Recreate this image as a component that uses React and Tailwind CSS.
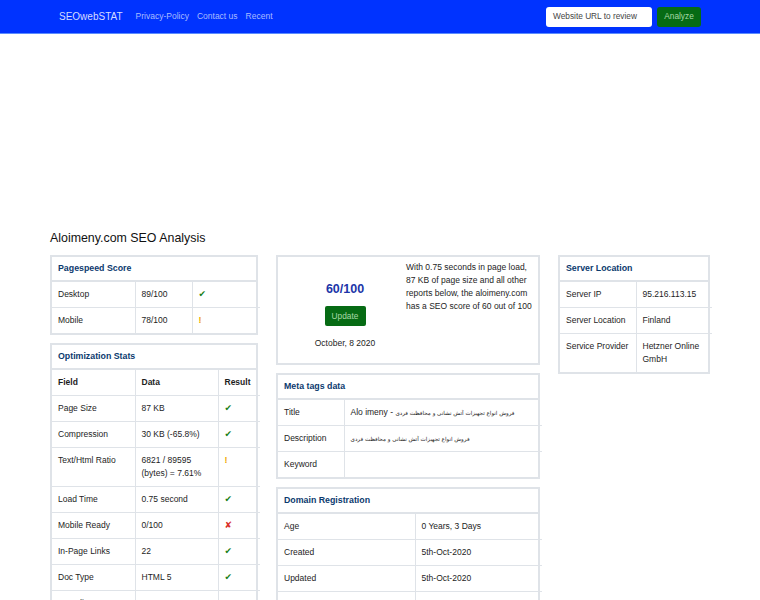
import React from 'react'

const font = { fontFamily: '"Liberation Sans", Arial, "DejaVu Sans", sans-serif' }
const arabic = { fontFamily: '"DejaVu Sans", sans-serif' }

function Check() {
  return <span className="text-[#1a7f1a] text-[9px]">✔</span>
}
function Warn() {
  return <span className="text-[#f0a800] font-bold text-[9px]">!</span>
}
function Cross() {
  return <span className="text-[#d9302a] text-[9px]">✘</span>
}

function Card({ title, children, className = '' }) {
  return (
    <div className={`border-2 border-[#dfe3e8] ${className}`}>
      <div className="px-[6px] h-[25px] flex items-center border-b-2 border-[#dfe3e8] text-[8.8px] font-bold text-[#0b3a6e]">
        {title}
      </div>
      <table className="w-full border-collapse table-fixed">
        <tbody>{children}</tbody>
      </table>
    </div>
  )
}

function Row({ cells, widths, bold }) {
  return (
    <tr className="border-t border-[#dfe3e8] first:border-t-0">
      {cells.map((c, i) => (
        <td
          key={i}
          style={widths ? { width: widths[i] } : undefined}
          className={`align-top px-[6px] py-[6px] leading-[13px] text-[8.5px] text-[#1d1d1d] border-l border-[#dfe3e8] first:border-l-0 whitespace-nowrap ${bold ? 'font-bold' : ''}`}
        >
          {c}
        </td>
      ))}
    </tr>
  )
}

function Ar({ children }) {
  return <span style={arabic} className="text-[5.6px] leading-[8px] inline-block align-middle">{children}</span>
}

export default function App() {
  const opt = [
    ['Page Size', '87 KB', <Check />],
    ['Compression', '30 KB (-65.8%)', <Check />],
    ['Text/Html Ratio', <>6821 / 89595<br />(bytes) = 7.61%</>, <Warn />],
    ['Load Time', '0.75 second', <Check />],
    ['Mobile Ready', '0/100', <Cross />],
    ['In-Page Links', '22', <Check />],
    ['Doc Type', 'HTML 5', <Check />],
    ['Encoding', 'UTF-8', <Check />],
  ]
  return (
    <div style={font} className="w-[760px] h-[600px] bg-white overflow-hidden">
      <nav className="h-[34px] bg-[#0033ff] border-b border-[#5b8cff] flex items-center pl-[59px] pr-[59px]">
        <span className="text-[10px] text-[#d5dcff] mr-[13px]">SEOwebSTAT</span>
        <div className="flex gap-[8px] text-[8.5px] text-[#a9bbff]">
          <span>Privacy-Policy</span>
          <span>Contact us</span>
          <span>Recent</span>
        </div>
        <div className="ml-auto flex items-center gap-[5px]">
          <div className="w-[106px] h-[20px] bg-white rounded-[3px] flex items-center px-[7px] text-[8.3px] text-[#444]">
            Website URL to review
          </div>
          <div className="w-[44px] h-[20px] bg-[#066b14] rounded-[3px] flex items-center justify-center text-[8.3px] text-[#a6d9a6]">
            Analyze
          </div>
        </div>
      </nav>

      <div className="h-[191px]" />

      <div className="pl-[50px]">
        <h1 className="text-[12.4px] text-[#111] leading-[26px] h-[30px]">Aloimeny.com SEO Analysis</h1>
        <div className="flex gap-[18px] items-start">
          <div className="w-[208px] flex flex-col gap-[8px]">
            <Card title="Pagespeed Score">
              <Row widths={[83, 57, 68]} cells={['Desktop', '89/100', <Check />]} />
              <Row widths={[83, 57, 68]} cells={['Mobile', '78/100', <Warn />]} />
            </Card>
            <Card title="Optimization Stats">
              <Row bold widths={[83, 83, 42]} cells={['Field', 'Data', 'Result']} />
              {opt.map((r, i) => (
                <Row key={i} widths={[83, 83, 42]} cells={r} />
              ))}
            </Card>
          </div>

          <div className="w-[264px] flex flex-col gap-[8px]">
            <div className="border-2 border-[#dfe3e8] h-[110px] flex">
              <div className="w-[128px] pl-[6px] flex flex-col items-center pt-[24px]">
                <div className="text-[12.5px] font-bold text-[#1c35a8] leading-[16px]">60/100</div>
                <div className="mt-[9px] w-[41px] h-[20px] bg-[#066b14] rounded-[2px] flex items-center justify-center text-[8.3px] text-[#a6d9a6]">
                  Update
                </div>
                <div className="mt-[11px] text-[8.5px] text-[#1d1d1d]">October, 8 2020</div>
              </div>
              <div className="pt-[4px] w-[130px] text-[8.5px] leading-[13px] text-[#1d1d1d]">
                With 0.75 seconds in page load, 87 KB of page size and all other reports below, the aloimeny.com has a SEO score of 60 out of 100
              </div>
            </div>
            <Card title="Meta tags data">
              <Row widths={[66, 198]} cells={['Title', <>Alo imeny - <Ar>فروش انواع تجهیزات آتش نشانی و محافظت فردی</Ar></>]} />
              <Row widths={[66, 198]} cells={['Description', <Ar>فروش انواع تجهیزات آتش نشانی و محافظت فردی</Ar>]} />
              <Row widths={[66, 198]} cells={['Keyword', '']} />
            </Card>
            <Card title="Domain Registration">
              <Row widths={[137, 127]} cells={['Age', '0 Years, 3 Days']} />
              <Row widths={[137, 127]} cells={['Created', '5th-Oct-2020']} />
              <Row widths={[137, 127]} cells={['Updated', '5th-Oct-2020']} />
              <Row widths={[137, 127]} cells={['Expiry', '5th-Oct-2021']} />
            </Card>
          </div>

          <div className="w-[152px]">
            <Card title="Server Location">
              <Row widths={[76, 76]} cells={['Server IP', '95.216.113.15']} />
              <Row widths={[76, 76]} cells={['Server Location', 'Finland']} />
              <Row widths={[76, 76]} cells={['Service Provider', <>Hetzner Online<br />GmbH</>]} />
            </Card>
          </div>
        </div>
      </div>
    </div>
  )
}
